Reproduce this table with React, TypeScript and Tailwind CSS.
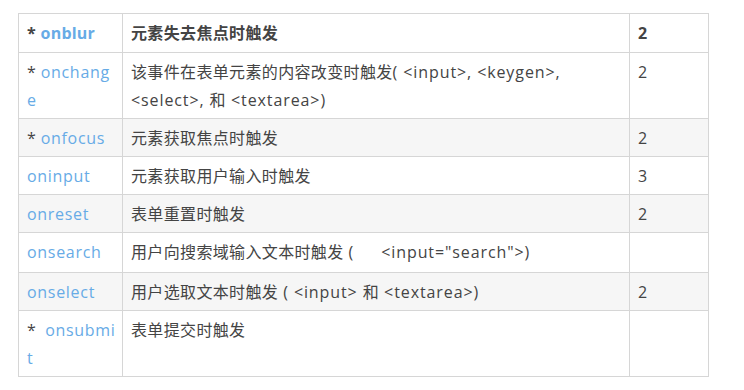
import React from "react";

const font = { fontFamily: '"Open Sans", "Noto Sans CJK SC", sans-serif' };

type Row = {
  name: React.ReactNode;
  desc: React.ReactNode;
  num: string;
  bg: string;
  bold?: boolean;
  extra?: string;
};

const L = ({ children }: { children: React.ReactNode }) => (
  <span className="tracking-[0.9px]">{children}</span>
);

const Link = ({ children }: { children: React.ReactNode }) => (
  <span className="text-[#67abe6] tracking-[0.7px]">{children}</span>
);

const rows: Row[] = [
  {
    name: (
      <>
        * <span className="text-[#67abe6] tracking-[0.2px]">onblur</span>
      </>
    ),
    desc: "元素失去焦点时触发",
    num: "2",
    bg: "bg-white",
    bold: true,
    extra: "pb-[5px]",
  },
  {
    name: (
      <>
        * <Link>onchang</Link>
        <br />
        <Link>e</Link>
      </>
    ),
    desc: (
      <>
        该事件在表单元素的内容改变时触发
        <L>( &lt;input&gt;, &lt;keygen&gt;,</L>
        <br />
        <L>&lt;select&gt;, </L>和<L> &lt;textarea&gt;)</L>
      </>
    ),
    num: "2",
    bg: "bg-white",
  },
  {
    name: (
      <>
        * <Link>onfocus</Link>
      </>
    ),
    desc: "元素获取焦点时触发",
    num: "2",
    bg: "bg-[#f6f6f6]",
  },
  { name: <Link>oninput</Link>, desc: "元素获取用户输入时触发", num: "3", bg: "bg-white" },
  { name: <Link>onreset</Link>, desc: "表单重置时触发", num: "2", bg: "bg-[#f6f6f6]" },
  {
    name: <Link>onsearch</Link>,
    desc: (
      <>
        用户向搜索域输入文本时触发<L> (</L>
        <span className="inline-block w-[27px]"></span>
        <L>&lt;input="search"&gt;)</L>
      </>
    ),
    num: "",
    bg: "bg-white",
    extra: "pb-[6px]",
  },
  {
    name: <Link>onselect</Link>,
    desc: (
      <>
        用户选取文本时触发<L> ( &lt;input&gt; </L>和<L> &lt;textarea&gt;)</L>
      </>
    ),
    num: "2",
    bg: "bg-[#f6f6f6]",
  },
  {
    name: (
      <>
        *&nbsp; <Link>onsubmi</Link>
        <br />
        <Link>t</Link>
      </>
    ),
    desc: "表单提交时触发",
    num: "",
    bg: "bg-white",
  },
];

export default function App() {
  return (
    <div className="w-[744px] h-[390px] bg-white pt-[13px] pl-[18px]" style={font}>
      <div className="w-[691px] border-l border-t border-[#d6d6d6] grid grid-cols-[104px_507px_79px] text-[16px] leading-[28px] text-[#444] tracking-[0.35px]">
        {rows.map((r, i) => {
          const cell = `border-r border-b border-[#d6d6d6] px-[8px] pt-[5px] ${r.extra ?? "pb-[4px]"} ${r.bg} ${r.bold ? "font-bold" : ""}`;
          return (
            <React.Fragment key={i}>
              <div className={`${cell} whitespace-nowrap overflow-hidden`}>{r.name}</div>
              <div className={`${cell} whitespace-nowrap`}>{r.desc}</div>
              <div className={cell}>{r.num}</div>
            </React.Fragment>
          );
        })}
      </div>
    </div>
  );
}
